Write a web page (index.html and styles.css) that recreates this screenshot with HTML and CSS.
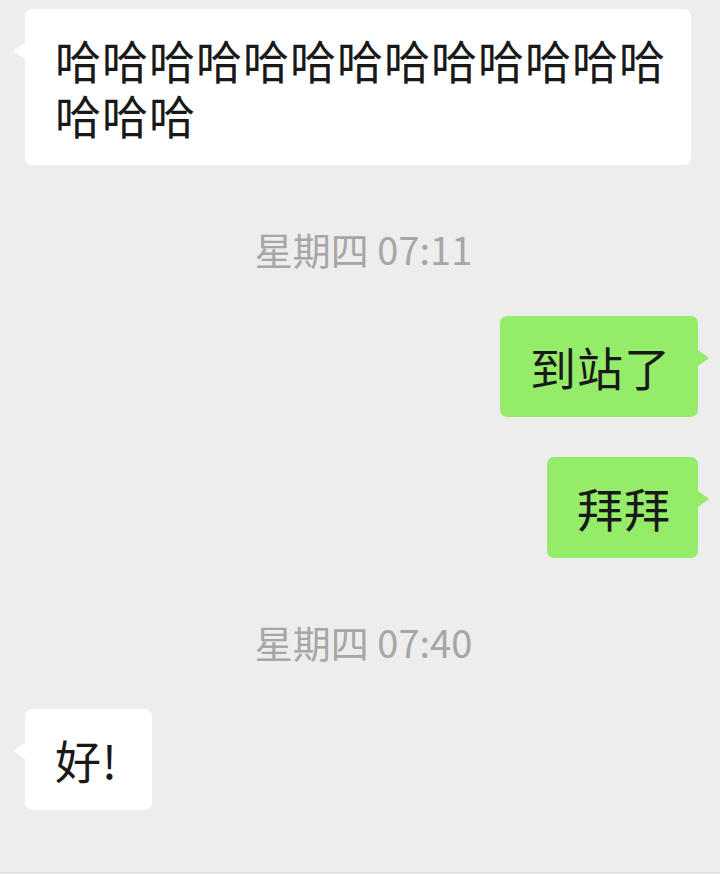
FILE: index.html
```html
<!DOCTYPE html>
<html lang="zh-Hans">
<head>
  <meta charset="UTF-8" />
  <meta name="viewport" content="width=device-width, initial-scale=1.0" />
  <title>聊天</title>
  <link rel="stylesheet" href="styles.css">
</head>
<body>
  <div class="chat">
    <div class="msg left first">哈哈哈哈哈哈哈哈哈哈哈哈哈哈哈哈</div>
    <div class="time">星期四 07:11</div>
    <div class="msg right">到站了</div>
    <div class="msg right">拜拜</div>
    <div class="time">星期四 07:40</div>
    <div class="msg left">好!</div>
  </div>
</body>
</html>
```

FILE: styles.css
```css
html, body {
  margin: 0;
  background: #ededed;
}
body {
  font-family: "Noto Sans CJK SC", "Noto Sans", sans-serif;
  color: #191919;
}
.chat {
  height: 873px;
  box-sizing: border-box;
  border-bottom: 1px solid #dcdcdc;
  padding: 9px 22px 0 25px;
  display: flex;
  flex-direction: column;
  align-items: flex-start;
}
.msg {
  position: relative;
  box-sizing: border-box;
  min-width: 127px;
  max-width: 666px;
  padding: 23px 24px 23px 30px;
  font-size: 46px;
  line-height: 55px;
  letter-spacing: 1px;
  border-radius: 7px;
  background: #fff;
  margin-top: 40px;
}
.msg.first {
  margin-top: 0;
}
.msg::before {
  content: "";
  position: absolute;
  top: 34px;
  border-top: 8px solid transparent;
  border-bottom: 8px solid transparent;
}
.msg.left::before {
  left: -12px;
  border-right: 12px solid #fff;
}
.msg.right {
  align-self: flex-end;
  background: #95ec69;
  padding-right: 27px;
}
.msg.right::before {
  right: -11px;
  border-left: 11px solid #95ec69;
}
.time {
  align-self: stretch;
  text-align: center;
  padding-left: 4px;
  font-size: 38px;
  line-height: 50px;
  color: #a6a6a6;
  margin: 59px 0 1px;
}
.time + .msg {
  margin-top: 41px;
}
```
